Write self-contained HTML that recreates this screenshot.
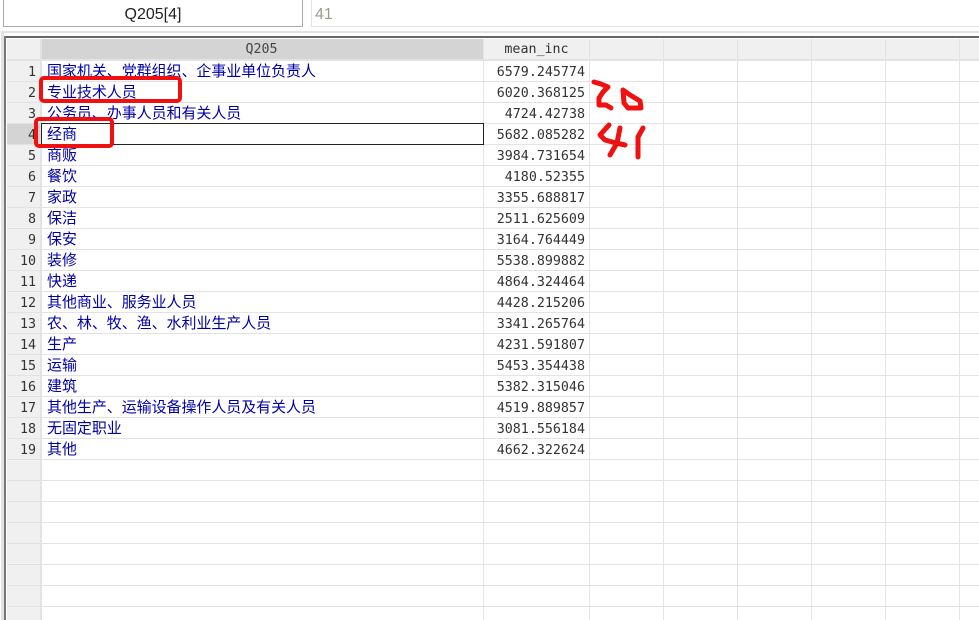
<!DOCTYPE html>
<html>
<head>
<meta charset="utf-8">
<style>
html,body{margin:0;padding:0;background:#fff}
body{width:979px;height:620px;position:relative;overflow:hidden}
div{position:absolute;box-sizing:border-box}
.h{left:7px;width:972px;height:1px;background:#e3e3e3}
.v{top:39px;width:1px;height:581px;background:#e3e3e3}
.n{left:7px;width:29px;height:21px;margin-top:1px;text-align:right;font:13.33px/21px "DejaVu Sans Mono","Liberation Mono",monospace;color:#333}
.t{left:47px;height:21px;white-space:nowrap;letter-spacing:-0.06px;font:15px/21px "WenQuanYi Zen Hei","Noto Sans CJK SC",sans-serif;color:#0000a8}
.d{left:484px;width:101px;height:21px;margin-top:1px;text-align:right;font:13.33px/21px "DejaVu Sans Mono","Liberation Mono",monospace;color:#333}
</style>
</head>
<body>
<div style="left:3px;top:-2px;width:300px;height:29px;border:1px solid #aaa;background:#fff;text-align:center;font:16px/31px 'Liberation Sans',sans-serif;color:#222">Q205[4]</div>
<div style="left:311px;top:-2px;width:668px;height:29px;border:1px solid #e2e2e2;border-right:0;background:#fff;padding-left:3px;font:16px/31px 'Liberation Sans',sans-serif;color:#a09a8c">41</div>
<div style="left:1px;top:31px;width:978px;height:2px;background:#e2e2e2"></div>
<div style="left:1px;top:31px;width:3px;height:589px;background:#e2e2e2"></div>
<div style="left:4px;top:36px;width:975px;height:2px;background:#666"></div>
<div style="left:4px;top:36px;width:2px;height:584px;background:#777"></div>

<div style="left:7px;top:39px;width:972px;height:20px;background:#f0f0f0"></div>
<div style="left:7px;top:59px;width:34px;height:561px;background:#f0f0f0"></div>
<div style="left:42px;top:39px;width:441px;height:20px;background:#d4d4d4"></div>
<div style="left:7px;top:123px;width:34px;height:21px;background:#d4d4d4"></div>

<div class="h" style="top:59px;height:2px"></div><div class="h" style="top:81px"></div><div class="h" style="top:102px"></div>
<div class="h" style="top:123px"></div><div class="h" style="top:144px"></div><div class="h" style="top:165px"></div>
<div class="h" style="top:186px"></div><div class="h" style="top:207px"></div><div class="h" style="top:228px"></div>
<div class="h" style="top:249px"></div><div class="h" style="top:270px"></div><div class="h" style="top:291px"></div>
<div class="h" style="top:312px"></div><div class="h" style="top:333px"></div><div class="h" style="top:354px"></div>
<div class="h" style="top:375px"></div><div class="h" style="top:396px"></div><div class="h" style="top:417px"></div>
<div class="h" style="top:438px"></div><div class="h" style="top:459px"></div><div class="h" style="top:480px"></div>
<div class="h" style="top:501px"></div><div class="h" style="top:522px"></div><div class="h" style="top:543px"></div>
<div class="h" style="top:564px"></div><div class="h" style="top:585px"></div><div class="h" style="top:606px"></div>

<div class="v" style="left:40px;width:2px"></div><div class="v" style="left:483px"></div><div class="v" style="left:589px"></div>
<div class="v" style="left:663px"></div><div class="v" style="left:737px"></div><div class="v" style="left:811px"></div>
<div class="v" style="left:885px"></div><div class="v" style="left:959px"></div>

<div style="left:41px;top:40px;width:441px;height:20px;text-align:center;font:13.33px/20px 'DejaVu Sans Mono','Liberation Mono',monospace;color:#444">Q205</div>
<div style="left:484px;top:40px;width:105px;height:20px;text-align:center;font:13.33px/20px 'DejaVu Sans Mono','Liberation Mono',monospace;color:#333">mean_inc</div>

<div style="left:41px;top:123px;width:443px;height:22px;border:1px solid #222;background:#fff"></div>

<div class="n" style="top:61px">1</div><div class="t" style="top:60px">国家机关、党群组织、企事业单位负责人</div><div class="d" style="top:61px">6579.245774</div>
<div class="n" style="top:82px">2</div><div class="t" style="top:81px">专业技术人员</div><div class="d" style="top:82px">6020.368125</div>
<div class="n" style="top:103px">3</div><div class="t" style="top:102px">公务员、办事人员和有关人员</div><div class="d" style="top:103px">4724.42738</div>
<div class="n" style="top:124px">4</div><div class="t" style="top:123px">经商</div><div class="d" style="top:124px">5682.085282</div>
<div class="n" style="top:145px">5</div><div class="t" style="top:144px">商贩</div><div class="d" style="top:145px">3984.731654</div>
<div class="n" style="top:166px">6</div><div class="t" style="top:165px">餐饮</div><div class="d" style="top:166px">4180.52355</div>
<div class="n" style="top:187px">7</div><div class="t" style="top:186px">家政</div><div class="d" style="top:187px">3355.688817</div>
<div class="n" style="top:208px">8</div><div class="t" style="top:207px">保洁</div><div class="d" style="top:208px">2511.625609</div>
<div class="n" style="top:229px">9</div><div class="t" style="top:228px">保安</div><div class="d" style="top:229px">3164.764449</div>
<div class="n" style="top:250px">10</div><div class="t" style="top:249px">装修</div><div class="d" style="top:250px">5538.899882</div>
<div class="n" style="top:271px">11</div><div class="t" style="top:270px">快递</div><div class="d" style="top:271px">4864.324464</div>
<div class="n" style="top:292px">12</div><div class="t" style="top:291px">其他商业、服务业人员</div><div class="d" style="top:292px">4428.215206</div>
<div class="n" style="top:313px">13</div><div class="t" style="top:312px">农、林、牧、渔、水利业生产人员</div><div class="d" style="top:313px">3341.265764</div>
<div class="n" style="top:334px">14</div><div class="t" style="top:333px">生产</div><div class="d" style="top:334px">4231.591807</div>
<div class="n" style="top:355px">15</div><div class="t" style="top:354px">运输</div><div class="d" style="top:355px">5453.354438</div>
<div class="n" style="top:376px">16</div><div class="t" style="top:375px">建筑</div><div class="d" style="top:376px">5382.315046</div>
<div class="n" style="top:397px">17</div><div class="t" style="top:396px">其他生产、运输设备操作人员及有关人员</div><div class="d" style="top:397px">4519.889857</div>
<div class="n" style="top:418px">18</div><div class="t" style="top:417px">无固定职业</div><div class="d" style="top:418px">3081.556184</div>
<div class="n" style="top:439px">19</div><div class="t" style="top:438px">其他</div><div class="d" style="top:439px">4662.322624</div>

<svg width="979" height="620" style="position:absolute;left:0;top:0" fill="none" stroke="#f01010" stroke-linecap="round" stroke-linejoin="round">
<rect x="41" y="78" width="139" height="23" rx="3" stroke-width="4"/>
<rect x="36" y="119" width="76" height="27" rx="3" stroke-width="4"/>
<g stroke-width="5">
<path d="M594 82 L601 84 L608 87 L603 92 L599 98 L599 105 L606 105 L611 108"/>
<path d="M623 90 L624 103 L628 108 L641 108 L640 101 L630 95 Z"/>
<path d="M609 125 L600 135 L605 140 L616 143 L625 145"/>
<path d="M620 128 L617 143 L610 155"/>
<path d="M643 128 L638 137 L638 157"/>
</g>
</svg>
</body>
</html>
